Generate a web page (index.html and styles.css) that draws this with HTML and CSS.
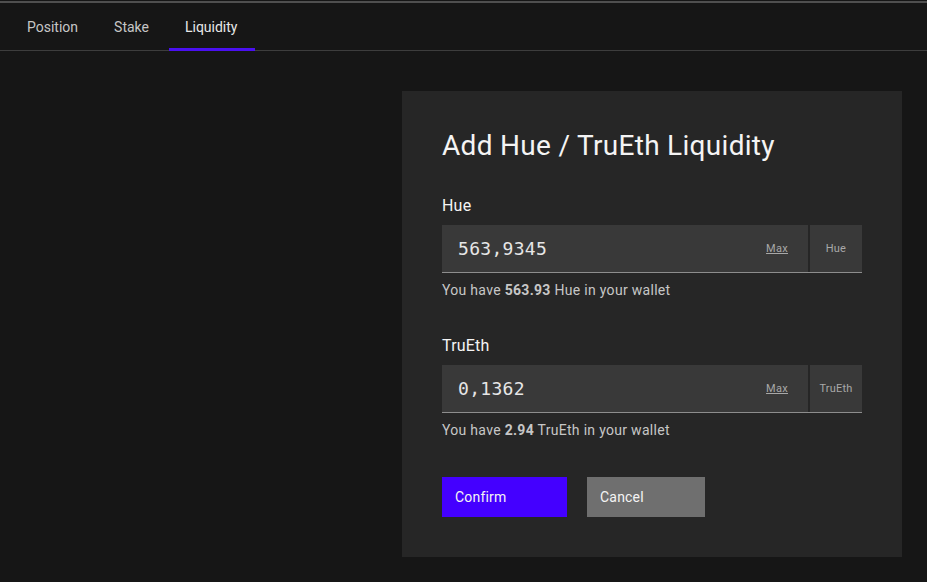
FILE: index.html
```html
<!DOCTYPE html>
<html lang="en">
<head>
<meta charset="utf-8">
<title>Add Liquidity</title>
<link rel="stylesheet" href="styles.css">
</head>
<body>
<div class="app">
  <nav class="tabs">
    <a class="tab">Position</a>
    <a class="tab">Stake</a>
    <a class="tab active">Liquidity</a>
  </nav>
  <main class="main">
    <section class="panel">
      <h1 class="title">Add Hue / TruEth Liquidity</h1>
      <div class="field">
        <label class="label">Hue</label>
        <div class="input-row">
          <div class="input">
            <span class="value">563,9345</span>
            <span class="max">Max</span>
          </div>
          <div class="unit">Hue</div>
        </div>
        <p class="helper">You have <b>563.93</b> Hue in your wallet</p>
      </div>
      <div class="field">
        <label class="label">TruEth</label>
        <div class="input-row">
          <div class="input">
            <span class="value">0,1362</span>
            <span class="max">Max</span>
          </div>
          <div class="unit">TruEth</div>
        </div>
        <p class="helper">You have <b>2.94</b> TruEth in your wallet</p>
      </div>
      <div class="actions">
        <button class="btn btn-primary">Confirm</button>
        <button class="btn btn-secondary">Cancel</button>
      </div>
    </section>
  </main>
</div>
</body>
</html>
```
FILE: styles.css
```css
html, body {
  margin: 0;
  padding: 0;
  background: #161616;
  height: 100%;
}
body {
  font-family: Roboto, "Noto Sans", sans-serif;
  color: #f4f4f4;
}
.app {
  padding-top: 1px;
  min-height: 100%;
  box-sizing: border-box;
}
.tabs {
  display: flex;
  gap: 4px;
  padding-left: 11px;
  border-top: 2px solid #4f4f4f;
  border-bottom: 1px solid #3d3d3d;
  height: 47px;
}
.tab {
  display: flex;
  align-items: center;
  padding: 0 16px;
  font-size: 14px;
  color: #c6c6c6;
  border-bottom: 3px solid transparent;
  box-sizing: border-box;
  height: 48px;
  margin-bottom: -1px;
  padding-top: 3px;
}
.tab.active {
  color: #e8e8e8;
  border-bottom-color: #4a10f0;
  padding: 3px 18px 0 16px;
}
.main {
  padding: 40px 0 0 402px;
}
.panel {
  width: 500px;
  box-sizing: border-box;
  background: #262626;
  padding: 37px 40px 40px;
}
.title {
  margin: 0 0 31px;
  font-size: 28px;
  font-weight: 400;
  line-height: 36px;
  letter-spacing: 0.3px;
  color: #f4f4f4;
}
.field {
  margin-bottom: 36px;
}
.label {
  display: block;
  font-size: 16px;
  line-height: 22px;
  color: #f4f4f4;
  margin-bottom: 8px;
  letter-spacing: 0.2px;
}
.input-row {
  display: flex;
  height: 48px;
  border-bottom: 1px solid #8d8d8d;
  box-sizing: border-box;
}
.input {
  flex: 1;
  display: flex;
  align-items: center;
  background: #393939;
  padding: 0 20px 0 16px;
  border-right: 2px solid #262626;
}
.value {
  flex: 1;
  font-family: "DejaVu Sans Mono", "Liberation Mono", monospace;
  font-size: 18px;
  color: #e6e6e6;
  letter-spacing: 0.3px;
}
.max {
  font-size: 11px;
  color: #a8a8a8;
  text-decoration: underline;
  letter-spacing: 0.3px;
}
.unit {
  width: 52px;
  background: #393939;
  display: flex;
  align-items: center;
  justify-content: center;
  font-size: 11px;
  color: #a8a8a8;
  letter-spacing: 0.2px;
}
.helper {
  margin: 8px 0 0;
  font-size: 14px;
  line-height: 18px;
  color: #c6c6c6;
  letter-spacing: 0.3px;
}
.helper b {
  font-weight: 700;
}
.field:nth-of-type(2) {
  margin-bottom: 0;
}
.actions {
  display: flex;
  gap: 20px;
  margin-top: 38px;
}
.btn {
  height: 40px;
  border: none;
  font-family: inherit;
  font-size: 14px;
  text-align: left;
  padding: 0 13px;
  color: #f4f4f4;
  cursor: pointer;
  letter-spacing: 0.2px;
}
.btn-primary {
  width: 125px;
  background: #4400ff;
}
.btn-secondary {
  width: 118px;
  background: #6f6f6f;
}
```
